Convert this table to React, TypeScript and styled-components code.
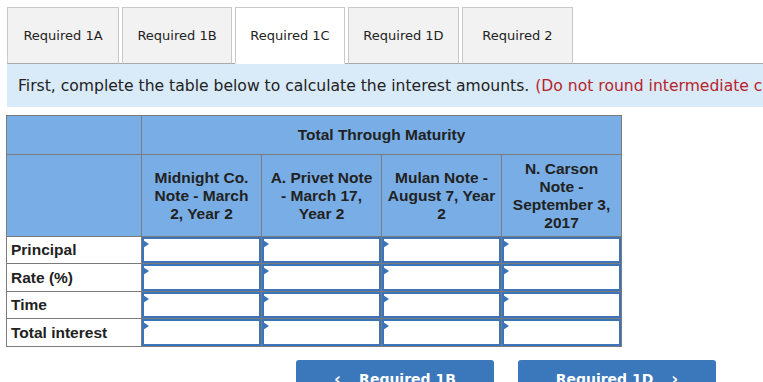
import React from 'react'
import styled, { createGlobalStyle } from 'styled-components'

const GlobalStyle = createGlobalStyle`
  body {
    margin: 0;
    background: #fff;
    overflow: hidden;
  }
`

const Page = styled.div`
  padding: 7px 0 0 7px;
  width: 1100px;
`

const Tabs = styled.ul`
  display: flex;
  gap: 3px;
  margin: 0;
  padding: 0;
  list-style: none;
  border-bottom: 1px solid #a9a9a9;
`

const Tab = styled.li<{ $active?: boolean; $width: number }>`
  width: ${(p) => p.$width}px;
  height: 57px;
  margin-bottom: -1px;
  display: flex;
  align-items: center;
  justify-content: center;
  box-sizing: border-box;
  border: 1px solid #c9c9c9;
  border-bottom: ${(p) => (p.$active ? '1px solid #fff' : '1px solid #a9a9a9')};
  background: ${(p) => (p.$active ? '#fff' : '#f2f2f2')};
  font-family: 'DejaVu Sans', Verdana, sans-serif;
  font-size: 13px;
  color: #222;
`

const Instructions = styled.p`
  margin: 0;
  height: 43px;
  padding-left: 11px;
  display: flex;
  align-items: center;
  background: #d9eaf8;
  font-family: 'DejaVu Sans', Verdana, sans-serif;
  font-size: 15.6px;
  color: #222;
  white-space: nowrap;

  & .note {
    color: #b8232b;
    margin-left: 6px;
  }
`

const Table = styled.table`
  margin: 8px 0 0 -1px;
  border-collapse: collapse;
  table-layout: fixed;
  width: 615px;
  font-family: 'Liberation Sans', Arial, sans-serif;
  font-size: 15.5px;
  font-weight: bold;
  color: #222;

  & th,
  & td {
    border: 1px solid #7b7b7b;
    padding: 0;
  }

  & th {
    background: #78ade5;
    text-align: center;
    line-height: 18px;
  }
`

const Col = styled.col<{ $width: number }>`
  width: ${(p) => p.$width}px;
`

const HeadRow = styled.tr<{ $height: number }>`
  height: ${(p) => p.$height}px;
`

const HeadCell = styled.th`
  padding: 0 5px !important;
`

const LabelCell = styled.td`
  text-align: left;
  padding-left: 4px !important;
`

const InputCell = styled.td<{ $height: number }>`
  height: ${(p) => p.$height}px;
`

// answer box with the small blue flag in its corner
const Entry = styled.div`
  position: relative;
  height: 100%;
  box-sizing: border-box;
  border: 2px solid #3b74b9;
  background: #fff;

  &::before {
    content: '';
    position: absolute;
    top: 1px;
    left: -1px;
    border-top: 4px solid transparent;
    border-bottom: 4px solid transparent;
    border-left: 6px solid #3b74b9;
  }
`

const Nav = styled.div`
  display: flex;
  gap: 24px;
  margin: 13px 0 0 289px;
`

const NavButton = styled.button`
  width: 198px;
  height: 40px;
  border: none;
  border-radius: 3px;
  background: #3a77bb;
  color: #fff;
  font-family: 'DejaVu Sans', Verdana, sans-serif;
  font-size: 14px;
  font-weight: bold;
  display: flex;
  align-items: flex-start;
  justify-content: center;
  gap: 18px;
  padding-top: 11px;

  & .chevron {
    font-size: 17px;
    line-height: 14px;
    margin-top: 1px;
  }
`

const tabs = [
  { label: 'Required 1A', width: 112 },
  { label: 'Required 1B', width: 110 },
  { label: 'Required 1C', width: 110, active: true },
  { label: 'Required 1D', width: 111 },
  { label: 'Required 2', width: 111 },
]
const columns = [135, 120, 120, 120, 120]
const rows = [
  { label: 'Principal', height: 26 },
  { label: 'Rate (%)', height: 27 },
  { label: 'Time', height: 26 },
  { label: 'Total interest', height: 27 },
]
const notes = [
  'Midnight Co. Note - March 2, Year 2',
  'A. Privet Note - March 17, Year 2',
  'Mulan Note - August 7, Year 2',
  'N. Carson Note - September 3, 2017',
]

const App = () => {
  return (
    <Page>
      <GlobalStyle />
      <Tabs>
        {tabs.map((t) => (
          <Tab key={t.label} $width={t.width} $active={t.active}>
            {t.label}
          </Tab>
        ))}
      </Tabs>
      <Instructions>
        First, complete the table below to calculate the interest amounts.
        <span className="note">(Do not round intermediate calculations.)</span>
      </Instructions>
      <Table>
        <colgroup>
          {columns.map((w, i) => (
            <Col key={i} $width={w} />
          ))}
        </colgroup>
        <thead>
          <HeadRow $height={39}>
            <th></th>
            <th colSpan={4}>Total Through Maturity</th>
          </HeadRow>
          <HeadRow $height={82}>
            <th></th>
            {notes.map((n) => (
              <HeadCell key={n}>{n}</HeadCell>
            ))}
          </HeadRow>
        </thead>
        <tbody>
          {rows.map((r) => (
            <tr key={r.label}>
              <LabelCell>{r.label}</LabelCell>
              {notes.map((n) => (
                <InputCell key={n} $height={r.height}>
                  <Entry />
                </InputCell>
              ))}
            </tr>
          ))}
        </tbody>
      </Table>
      <Nav>
        <NavButton>
          <span className="chevron">&lsaquo;</span>
          <span>Required 1B</span>
        </NavButton>
        <NavButton>
          <span>Required 1D</span>
          <span className="chevron">&rsaquo;</span>
        </NavButton>
      </Nav>
    </Page>
  )
}

export default App
